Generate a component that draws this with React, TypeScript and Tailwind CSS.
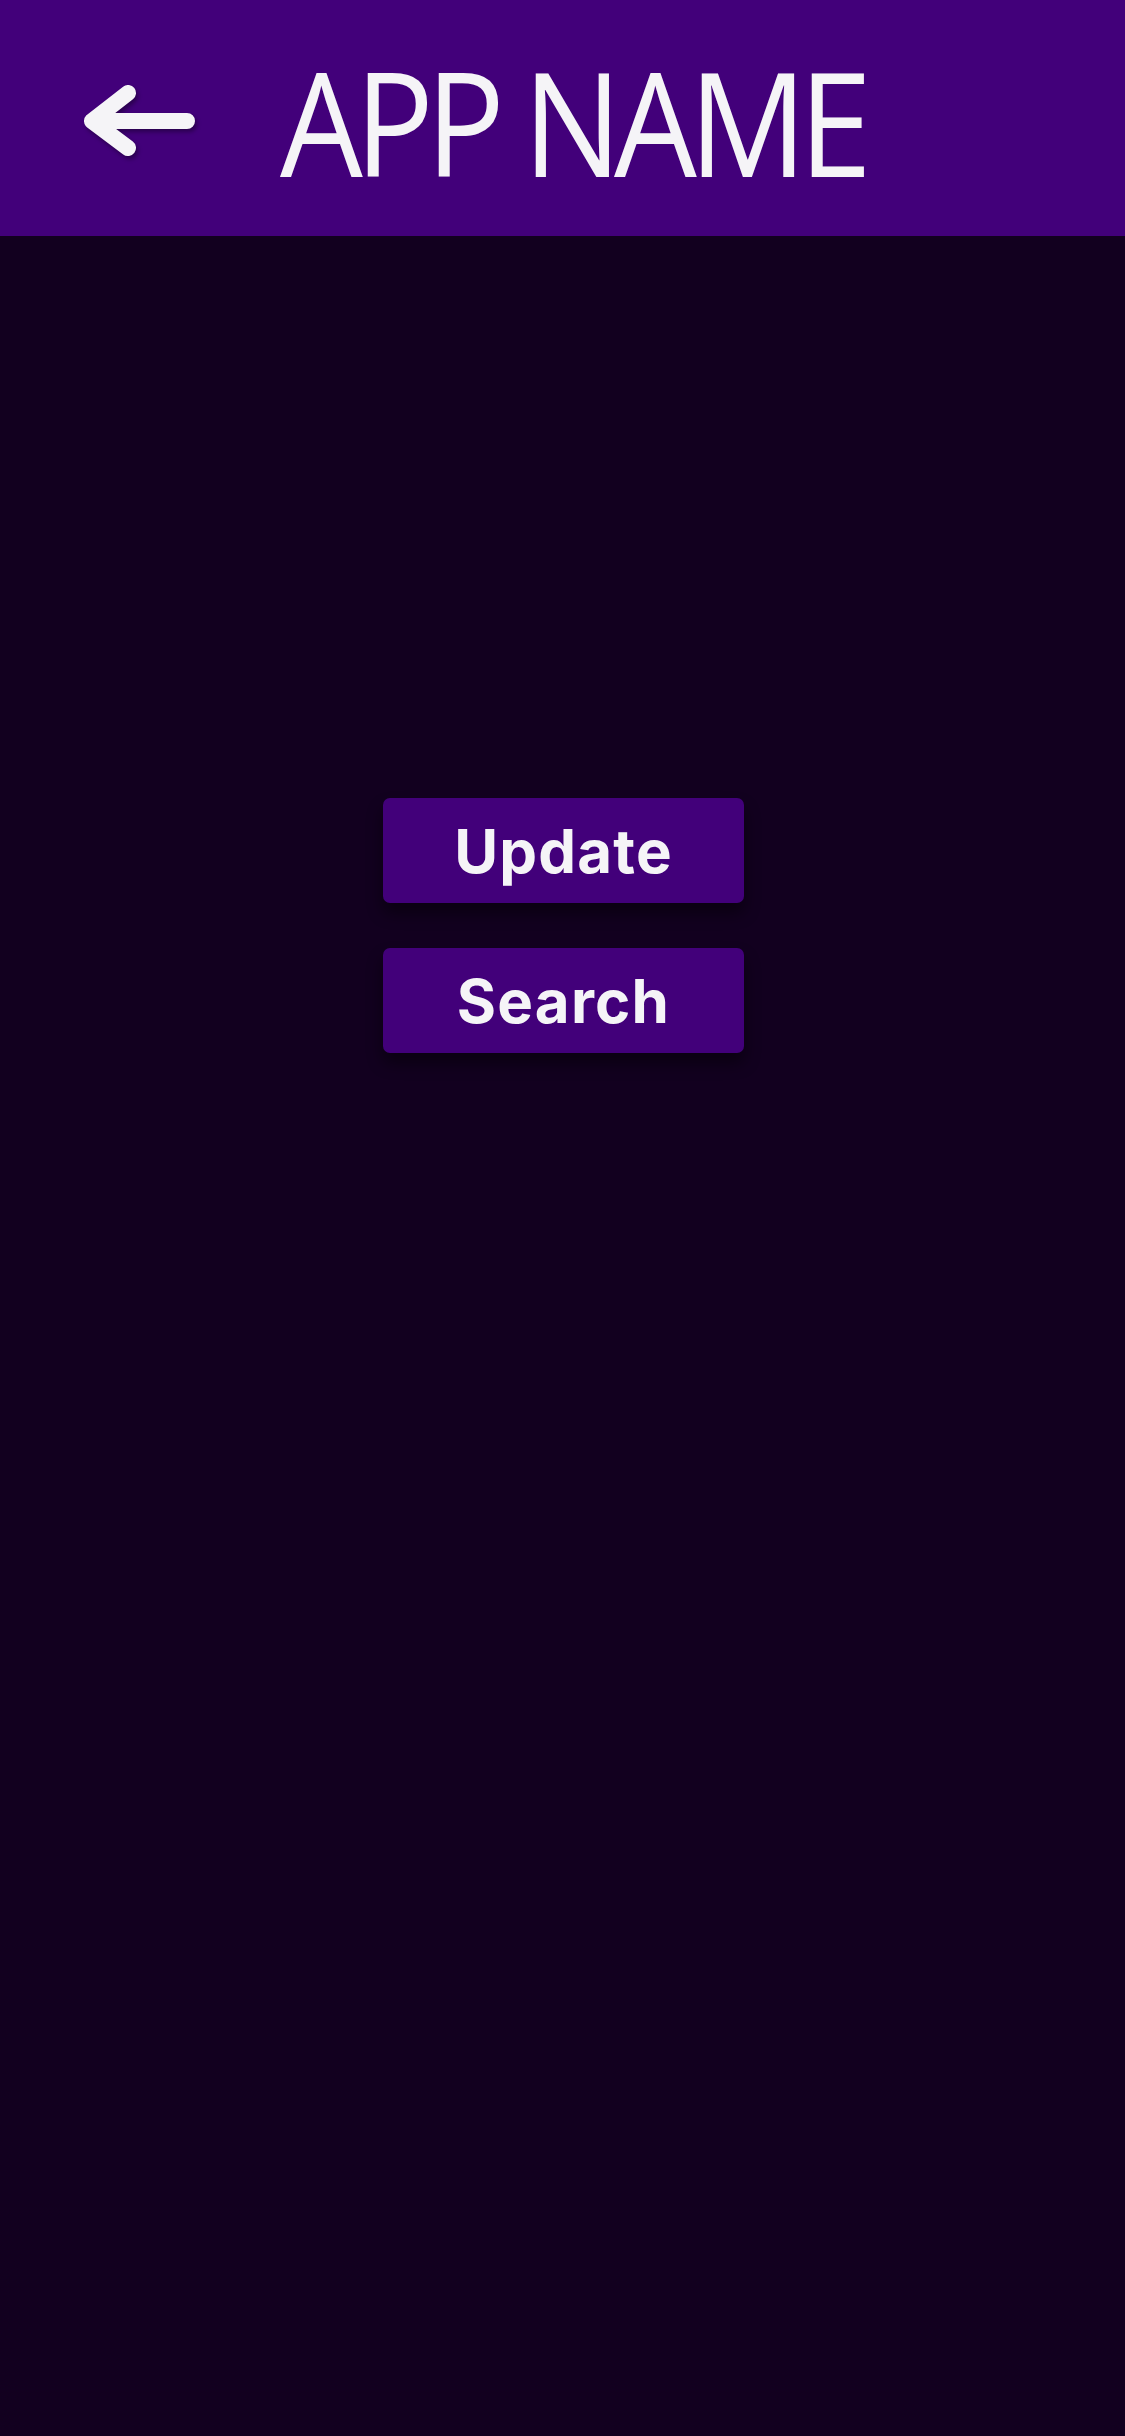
import React from 'react';

const BackArrow = () => (
  <svg
    width="130"
    height="90"
    viewBox="0 0 130 90"
    fill="none"
    className="mt-[6px] drop-shadow-[2px_3px_2px_rgba(0,0,0,0.35)]"
  >
    <path
      d="M17 45 H112 M53 17 L17 45 L53 72"
      stroke="#f5f4f7"
      strokeWidth="16"
      strokeLinecap="round"
      strokeLinejoin="round"
    />
  </svg>
);

const ActionButton = ({ label }: { label: string }) => (
  <button className="ml-[2px] flex h-[105px] w-[361px] items-center justify-center rounded-[7px] bg-[#42007a] font-['Inter',sans-serif] text-[60px] font-bold tracking-[0.02em] text-[#f5f4f7] shadow-[0_10px_16px_rgba(0,0,0,0.45)]">
    {label}
  </button>
);

export default function App() {
  return (
    <div className="flex min-h-[2436px] w-full flex-col bg-[#12001f]">
      <header className="flex h-[236px] items-center bg-[#42007a] pl-[75px]">
        <BackArrow />
        <h1 className="mt-[6px] ml-[75px] origin-left scale-x-[0.91] font-['Open_Sans',sans-serif] text-[144px] leading-none font-normal tracking-[-0.06em] text-[#f5f4f7]">
          APP NAME
        </h1>
      </header>
      <main className="flex flex-col items-center gap-[45px] pt-[562px]">
        <ActionButton label="Update" />
        <ActionButton label="Search" />
      </main>
    </div>
  );
}
